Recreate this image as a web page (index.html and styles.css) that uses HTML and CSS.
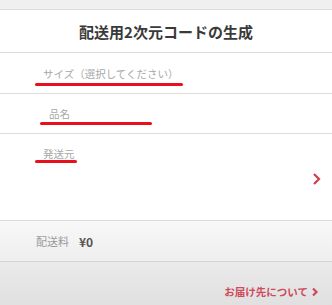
FILE: index.html
```html
<!DOCTYPE html>
<html lang="ja">
<head>
  <meta charset="UTF-8">
  <meta name="viewport" content="width=device-width, initial-scale=1.0">
  <title>配送用2次元コードの生成</title>
  <link rel="stylesheet" href="styles.css">
</head>
<body>
  <div class="topbar"></div>
  <div class="header">
    <h1>配送用2次元コードの生成</h1>
  </div>
  <div class="row row-size">
    <span class="label">サイズ（選択してください）</span>
    <span class="mark mark-size"></span>
  </div>
  <div class="row row-name">
    <span class="label">品名</span>
    <span class="mark mark-name"></span>
  </div>
  <div class="row row-from">
    <span class="label">発送元</span>
    <span class="mark mark-from"></span>
    <svg class="chevron" width="9" height="14" viewBox="0 0 9 14">
      <path d="M2 2 L7 7 L2 12" fill="none" stroke="#cf3f4f" stroke-width="2.2"/>
    </svg>
  </div>
  <div class="row row-fee">
    <span class="fee-label">配送料</span>
    <span class="fee-value">¥0</span>
  </div>
  <div class="footer">
    <a class="link">お届け先について
      <svg width="8" height="10" viewBox="0 0 8 10">
        <path d="M2 1.5 L5.5 5 L2 8.5" fill="none" stroke="#cf4a5a" stroke-width="2.2"/>
      </svg>
    </a>
  </div>
</body>
</html>
```

FILE: styles.css
```css
body {
  margin: 0;
  font-family: "Noto Sans CJK JP", "Noto Sans", sans-serif;
  background-color: #e4e4e4;
  width: 332px;
  height: 305px;
  overflow: hidden;
}
.topbar {
  height: 9px;
  background-color: #f0f0f0;
  border-bottom: 1px solid #dcdcdc;
}
.header {
  height: 42px;
  background-color: #fff;
  border-bottom: 1px solid #dcdcdc;
  display: flex;
  align-items: center;
  justify-content: center;
}
h1 {
  margin: 0;
  font-size: 15px;
  font-weight: bold;
  color: #3a3a3a;
}
.row {
  position: relative;
  background-color: #fff;
  border-bottom: 1px solid #dcdcdc;
  padding-left: 43px;
  display: flex;
  align-items: center;
}
.label {
  font-size: 10.5px;
  color: #a8a8a8;
}
.row-size {
  height: 40px;
}
.row-name {
  height: 39px;
}
.row-name .label {
  padding-left: 6px;
}
.row-from {
  height: 86px;
  align-items: flex-start;
}
.row-from .label {
  padding-top: 12px;
}
.chevron {
  position: absolute;
  right: 11px;
  top: 38px;
}
.row-fee {
  height: 40px;
  padding-left: 36px;
  background: linear-gradient(#f8f8f8, #eeeeee);
  border-bottom-color: #d4d4d4;
}
.fee-label {
  font-size: 11px;
  color: #9a9a9a;
}
.fee-value {
  font-size: 12px;
  font-weight: bold;
  color: #555;
  margin-left: 10px;
}
.footer {
  height: 44px;
  background: linear-gradient(#eaeaea, #e0e0e0);
  display: flex;
  align-items: flex-end;
  justify-content: flex-end;
  padding-right: 13px;
}
.link {
  font-size: 10.5px;
  font-weight: bold;
  color: #cf4a5a;
  margin-bottom: 7px;
  display: flex;
  align-items: center;
  gap: 3px;
}
.mark {
  position: absolute;
  height: 3px;
  border-radius: 2px;
  background-color: #e8101c;
}
.mark-size {
  left: 35px;
  top: 30px;
  width: 148px;
}
.mark-name {
  left: 40px;
  top: 28px;
  width: 112px;
}
.mark-from {
  left: 35px;
  top: 26px;
  width: 42px;
}
```
